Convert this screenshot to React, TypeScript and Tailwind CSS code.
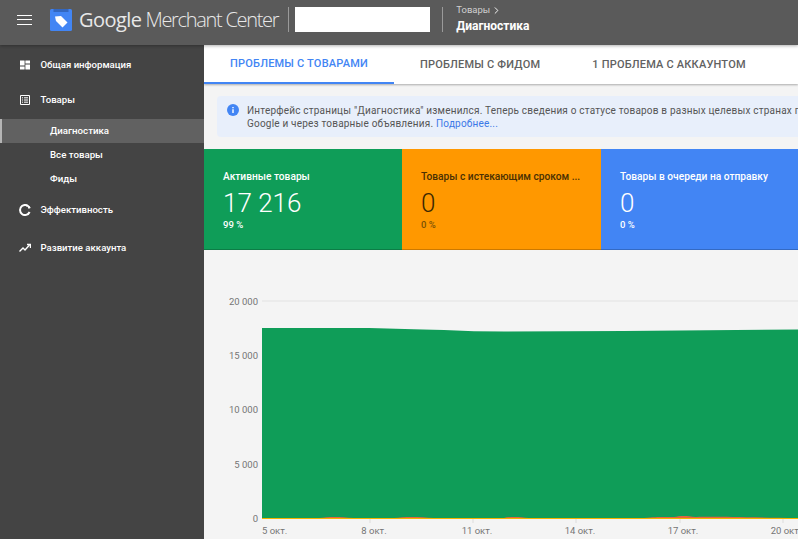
import { ChevronRight } from "lucide-react";

const subItems = [
	{ label: "Диагностика", active: true },
	{ label: "Все товары", active: false },
	{ label: "Фиды", active: false },
];

function NavIcon({ name }: { name: string }) {
	if (name === "dashboard") {
		return (
			<svg className="size-[12px]" viewBox="0 0 12 12" fill="#fff">
				<path d="M1 1.5h4.6v5H1zM6.4 1.5H11v3H6.4zM1 7.4h4.6v3.1H1zM6.4 5.4H11v5.1H6.4z" />
			</svg>
		);
	}
	if (name === "list") {
		return (
			<svg className="size-[12px]" viewBox="0 0 12 12" fill="none" stroke="#fff">
				<path d="M1.5 1.5h9v9h-9z" />
				<path d="M3 3.8h1M5 3.8h4M3 6h1M5 6h4M3 8.2h1M5 8.2h4" />
			</svg>
		);
	}
	if (name === "perf") {
		return (
			<svg className="size-[12px]" viewBox="0 0 12 12" fill="none" stroke="#fff" strokeWidth="2">
				<path d="M10.6 4A5 5 0 1 0 10.6 8" />
				<path d="M7 1.2A5 5 0 0 1 10.8 5" strokeDasharray="2 1" />
			</svg>
		);
	}
	return (
		<svg className="size-[12px]" viewBox="0 0 12 12" fill="none" stroke="#fff" strokeWidth="1.4">
			<path d="M.5 9.5l3.5-3.5 2 2 4.5-5" />
			<path d="M8 2.5h3.5V6" />
		</svg>
	);
}

function NavRow({ icon, label, className }: { icon: string; label: string; className: string }) {
	return (
		<div className={`flex items-center pl-[19px] ${className}`}>
			<NavIcon name={icon} />
			<span className="ml-[9.5px] text-[9.6px] font-medium text-white">{label}</span>
		</div>
	);
}

function StatCard({
	title,
	value,
	percent,
	className,
	muted,
}: {
	title: string;
	value: string;
	percent: string;
	className: string;
	muted?: boolean;
}) {
	return (
		<div className={`h-[101px] shrink-0 border-b border-black/20 pl-[19px] pt-[22px] ${className}`}>
			<div className={`text-[10.2px] leading-[12px] font-medium ${muted ? "text-[#4a3003]" : "text-white"}`}>{title}</div>
			<div className={`mt-[4px] text-[26px] leading-[32px] font-light ${muted ? "text-[#3d2802]" : "text-white"}`}>{value}</div>
			<div className={`text-[9.5px] leading-[12px] font-medium ${muted ? "text-[#7a5206]" : "text-white"}`}>{percent}</div>
		</div>
	);
}

function Chart() {
	const yLabels = [
		{ text: "20 000", y: 16 },
		{ text: "15 000", y: 70 },
		{ text: "10 000", y: 124 },
		{ text: "5 000", y: 179 },
		{ text: "0", y: 233 },
	];
	const xLabels = [
		{ text: "5 окт.", x: 58, tick: 0 },
		{ text: "8 окт.", x: 170, tick: 166 },
		{ text: "11 окт.", x: 273, tick: 269 },
		{ text: "14 окт.", x: 376, tick: 372 },
		{ text: "17 окт.", x: 479, tick: 476 },
		{ text: "20 окт.", x: 582, tick: 579 },
	];
	return (
		<svg className="block" width="594" height="254" viewBox="0 0 594 254">
			<line x1="58" x2="594" y1="16" y2="16" stroke="#e2e2e2" />
			{yLabels.map((l) => (
				<text key={l.text} x="54" y={l.y + 3.5} textAnchor="end" fontSize="9.5" fill="#757575">
					{l.text}
				</text>
			))}
			<path
				d="M58 43 L165 43 C190 43.5 210 44.5 240 45 C260 46 280 46.5 300 46.5 L420 46 L594 44.5 L594 233 L58 233 Z"
				fill="#0f9d58"
			/>
			<path
				d="M115 233 C125 231.5 135 231.5 150 233 L190 233 C200 231.5 215 231.5 230 233 L300 233 C305 231.5 315 231.5 325 233 L440 233 C455 231.5 460 232 470 232 C476 230.5 482 230.5 492 232 C510 231.5 530 232 594 233 Z"
				fill="#e0653f"
			/>
			<line x1="58" x2="594" y1="233.5" y2="233.5" stroke="#f4b400" strokeWidth="1.2" />
			{xLabels.map((l) => (
				<g key={l.text}>
					{l.tick > 0 && <line x1={l.tick} x2={l.tick} y1="234" y2="238" stroke="#dcdcdc" />}
					<text x={l.x} y="249" fontSize="9.5" fill="#757575" textAnchor={l.tick === 0 ? "start" : "middle"}>
						{l.text}
					</text>
				</g>
			))}
		</svg>
	);
}

export default function App() {
	return (
		<div className="flex h-[539px] w-[798px] flex-col overflow-hidden bg-[#f4f4f4] font-['Roboto',sans-serif]">
			<header className="z-10 flex h-[45px] shrink-0 items-center bg-[#5a5a5a] pb-[6px] shadow-[0_1px_3px_rgba(0,0,0,0.3)]">
				<div className="ml-[17px] flex w-[15px] flex-col gap-[3.5px]">
					<span className="h-px bg-white" />
					<span className="h-px bg-white" />
					<span className="h-px bg-white" />
				</div>
				<svg className="ml-[18px] size-[22px]" viewBox="0 0 22 22">
					<rect width="22" height="22" rx="1.5" fill="#4285f4" />
					<rect x="3.5" width="15" height="3" fill="#3367c0" />
					<path d="M6 8.5l6-.5 6.5 6.5-5 5L7 13z" fill="#fff" transform="translate(-1 -1)" />
				</svg>
				<div className="ml-[7px] flex items-baseline whitespace-nowrap font-['Open_Sans',sans-serif] text-[20px] text-[#e8e8e8]">
					<span className="tracking-[-0.55px]">Google</span>
					<span className="ml-[4px] font-light tracking-[-1.3px]">Merchant Center</span>
				</div>
				<div className="ml-[10px] h-[25px] w-px bg-[#9a9a9a]" />
				<div className="ml-[6px] h-[25px] w-[135px] bg-white" />
				<div className="ml-[12px] h-[25px] w-px bg-[#9a9a9a]" />
				<div className="mb-[2px] ml-[13px] flex flex-col">
					<div className="flex items-center text-[9.5px] leading-[12px] text-[#d0d0d0]">
						Товары
						<ChevronRight className="ml-[1px] size-[11px] text-white" />
					</div>
					<div className="mt-[3px] text-[12px] leading-[14px] font-bold text-white">Диагностика</div>
				</div>
			</header>

			<div className="flex min-h-0 flex-1">
				<aside className="w-[204px] shrink-0 bg-[#444444]">
					<NavRow icon="dashboard" label="Общая информация" className="mt-[13px] h-[14px]" />
					<NavRow icon="list" label="Товары" className="mt-[21px] h-[14px]" />
					<div className="mt-[12px]">
						{subItems.map((item) => (
							<div
								key={item.label}
								className={`flex h-[24px] items-center text-[9.7px] font-medium text-white ${
									item.active ? "border-l-2 border-[#b5b5b5] bg-[#616161] pl-[48px]" : "pl-[50px]"
								}`}
							>
								{item.label}
							</div>
						))}
					</div>
					<NavRow icon="perf" label="Эффективность" className="mt-[12px] h-[14px]" />
					<NavRow icon="trend" label="Развитие аккаунта" className="mt-[24px] h-[14px]" />
				</aside>

				<main className="min-w-0 flex-1 overflow-hidden">
					<nav className="flex h-[39px] items-stretch bg-white text-[11px] font-medium tracking-[0.2px] shadow-[0_1px_2px_rgba(0,0,0,0.3)]">
						<div className="flex w-[190px] items-center justify-center border-b-[2px] border-[#4285f4] pt-px text-[#4285f4]">
							ПРОБЛЕМЫ С ТОВАРАМИ
						</div>
						<div className="ml-[26px] flex items-center pt-px text-[#616161]">ПРОБЛЕМЫ С ФИДОМ</div>
						<div className="ml-[52px] flex items-center whitespace-nowrap pt-px text-[#616161]">1 ПРОБЛЕМА С АККАУНТОМ</div>
					</nav>

					<div className="mt-[12px] ml-[13px] flex h-[41px] w-[600px] rounded-l-[4px] bg-[#e8effb] pl-[10px] pt-[8px]">
						<svg className="size-[12px] shrink-0" viewBox="0 0 12 12">
							<circle cx="6" cy="6" r="6" fill="#4285f4" />
							<path d="M5.3 5.2h1.4v3.8H5.3zM5.3 2.9h1.4v1.3H5.3z" fill="#fff" />
						</svg>
						<p className="ml-[8px] whitespace-nowrap text-[10px] leading-[13px] tracking-[0.2px] text-[#555555]">
							Интерфейс страницы "Диагностика" изменился. Теперь сведения о статусе товаров в разных целевых странах п
							<br />
							Google и через товарные объявления. <span className="text-[#3b78e7]">Подробнее...</span>
						</p>
					</div>

					<div className="mt-[12px] flex">
						<StatCard className="w-[198px] bg-[#0f9d58]" title="Активные товары" value="17 216" percent="99 %" />
						<StatCard
							muted
							className="w-[199px] bg-[#ff9800]"
							title="Товары с истекающим сроком ..."
							value="0"
							percent="0 %"
						/>
						<StatCard className="w-[197px] bg-[#4285f4]" title="Товары в очереди на отправку" value="0" percent="0 %" />
					</div>

					<div className="mt-[35px]">
						<Chart />
					</div>
				</main>
			</div>
		</div>
	);
}
